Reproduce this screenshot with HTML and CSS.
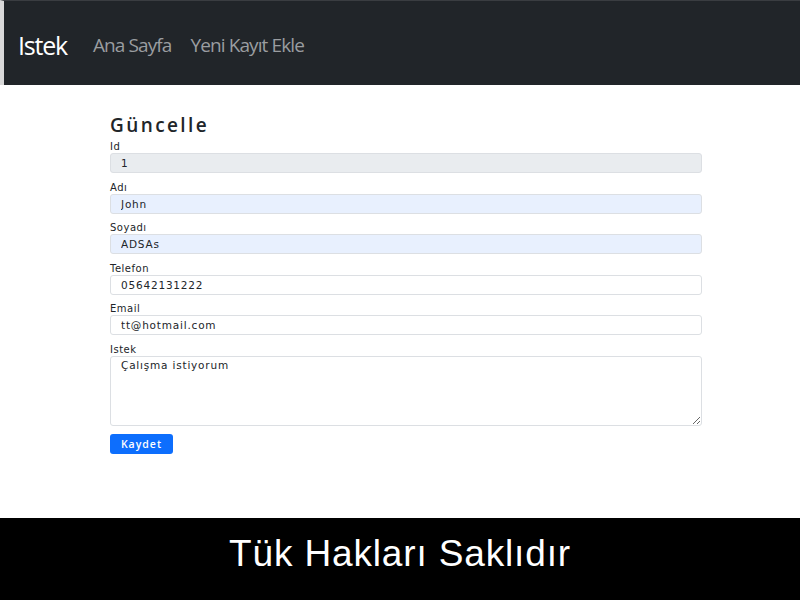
FILE: index.html
```html
<!DOCTYPE html>
<html lang="tr">
<head>
<meta charset="utf-8">
<title>Güncelle</title>
<link rel="stylesheet" href="styles.css">
</head>
<body>
<nav class="navbar">
  <span class="brand">Istek</span>
  <a class="nav-link" href="#">Ana Sayfa</a>
  <a class="nav-link" href="#">Yeni Kayıt Ekle</a>
</nav>
<main class="main">
  <h2 class="title">Güncelle</h2>
  <form class="form">
    <div class="group">
      <label class="label">Id</label>
      <input class="input readonly" value="1" readonly>
    </div>
    <div class="group">
      <label class="label">Adı</label>
      <input class="input filled" value="John">
    </div>
    <div class="group">
      <label class="label">Soyadı</label>
      <input class="input filled" value="ADSAs">
    </div>
    <div class="group">
      <label class="label">Telefon</label>
      <input class="input" value="05642131222">
    </div>
    <div class="group">
      <label class="label">Email</label>
      <input class="input" value="tt@hotmail.com">
    </div>
    <div class="group">
      <label class="label">Istek</label>
      <textarea class="input textarea">Çalışma istiyorum</textarea>
    </div>
    <button class="btn" type="button">Kaydet</button>
  </form>
</main>
<footer class="footer">Tük Hakları Saklıdır</footer>
</body>
</html>
```

FILE: styles.css
```css
* { box-sizing: border-box; }
html, body { margin: 0; padding: 0; }
body {
  width: 800px;
  height: 600px;
  display: flex;
  flex-direction: column;
  background: #fff;
  font-family: "Open Sans", "Noto Sans", sans-serif;
  overflow: hidden;
}
.navbar {
  height: 85px;
  background: #212529;
  border-left: 4px solid #d9d9d9;
  border-top: 1px solid #3a3d41;
  display: flex;
  align-items: center;
  padding-left: 14px;
  padding-top: 3px;
}
.brand {
  color: #fff;
  font-size: 25px;
  letter-spacing: -1.2px;
  margin-right: 26px;
}
.nav-link {
  color: #9a9da0;
  text-decoration: none;
  font-size: 19px;
  letter-spacing: -0.9px;
  margin-right: 19px;
}
.main {
  padding: 28px 0 0 110px;
  width: 702px;
}
.title {
  margin: 0 0 3px 0;
  font-size: 19px;
  line-height: 24px;
  font-weight: 600;
  letter-spacing: 2.4px;
  color: #212529;
}
.form { display: flex; flex-direction: column; }
.group {
  display: flex;
  flex-direction: column;
  margin-bottom: 7.5px;
}
.label {
  font-family: "DejaVu Sans", sans-serif;
  font-size: 10px;
  line-height: 13px;
  letter-spacing: 0.5px;
  color: #212529;
}
.input {
  height: 20px;
  border: 1px solid #dcdfe3;
  border-radius: 3px;
  padding: 0 10px;
  font-family: "DejaVu Sans", sans-serif;
  font-size: 10.5px;
  letter-spacing: 0.8px;
  color: #212529;
  background: #fff;
  outline: none;
}
.readonly { background: #e9ecef; }
.filled { background: #e8f0fe; }
.textarea {
  height: 70px;
  padding-top: 2px;
  resize: vertical;
}
.btn {
  align-self: flex-start;
  width: 63px;
  height: 20px;
  margin-top: 0.5px;
  background: #0d6efd;
  border: none;
  border-radius: 3px;
  color: #fff;
  font-family: "Open Sans", "Noto Sans", sans-serif;
  font-size: 10.5px;
  font-weight: 600;
  letter-spacing: 1px;
  padding: 0;
}
.footer {
  margin-top: auto;
  height: 82px;
  background: #000;
  color: #fff;
  text-align: center;
  font-family: "Liberation Sans", Arial, sans-serif;
  font-size: 37px;
  line-height: 72px;
  letter-spacing: 0.85px;
}
```
